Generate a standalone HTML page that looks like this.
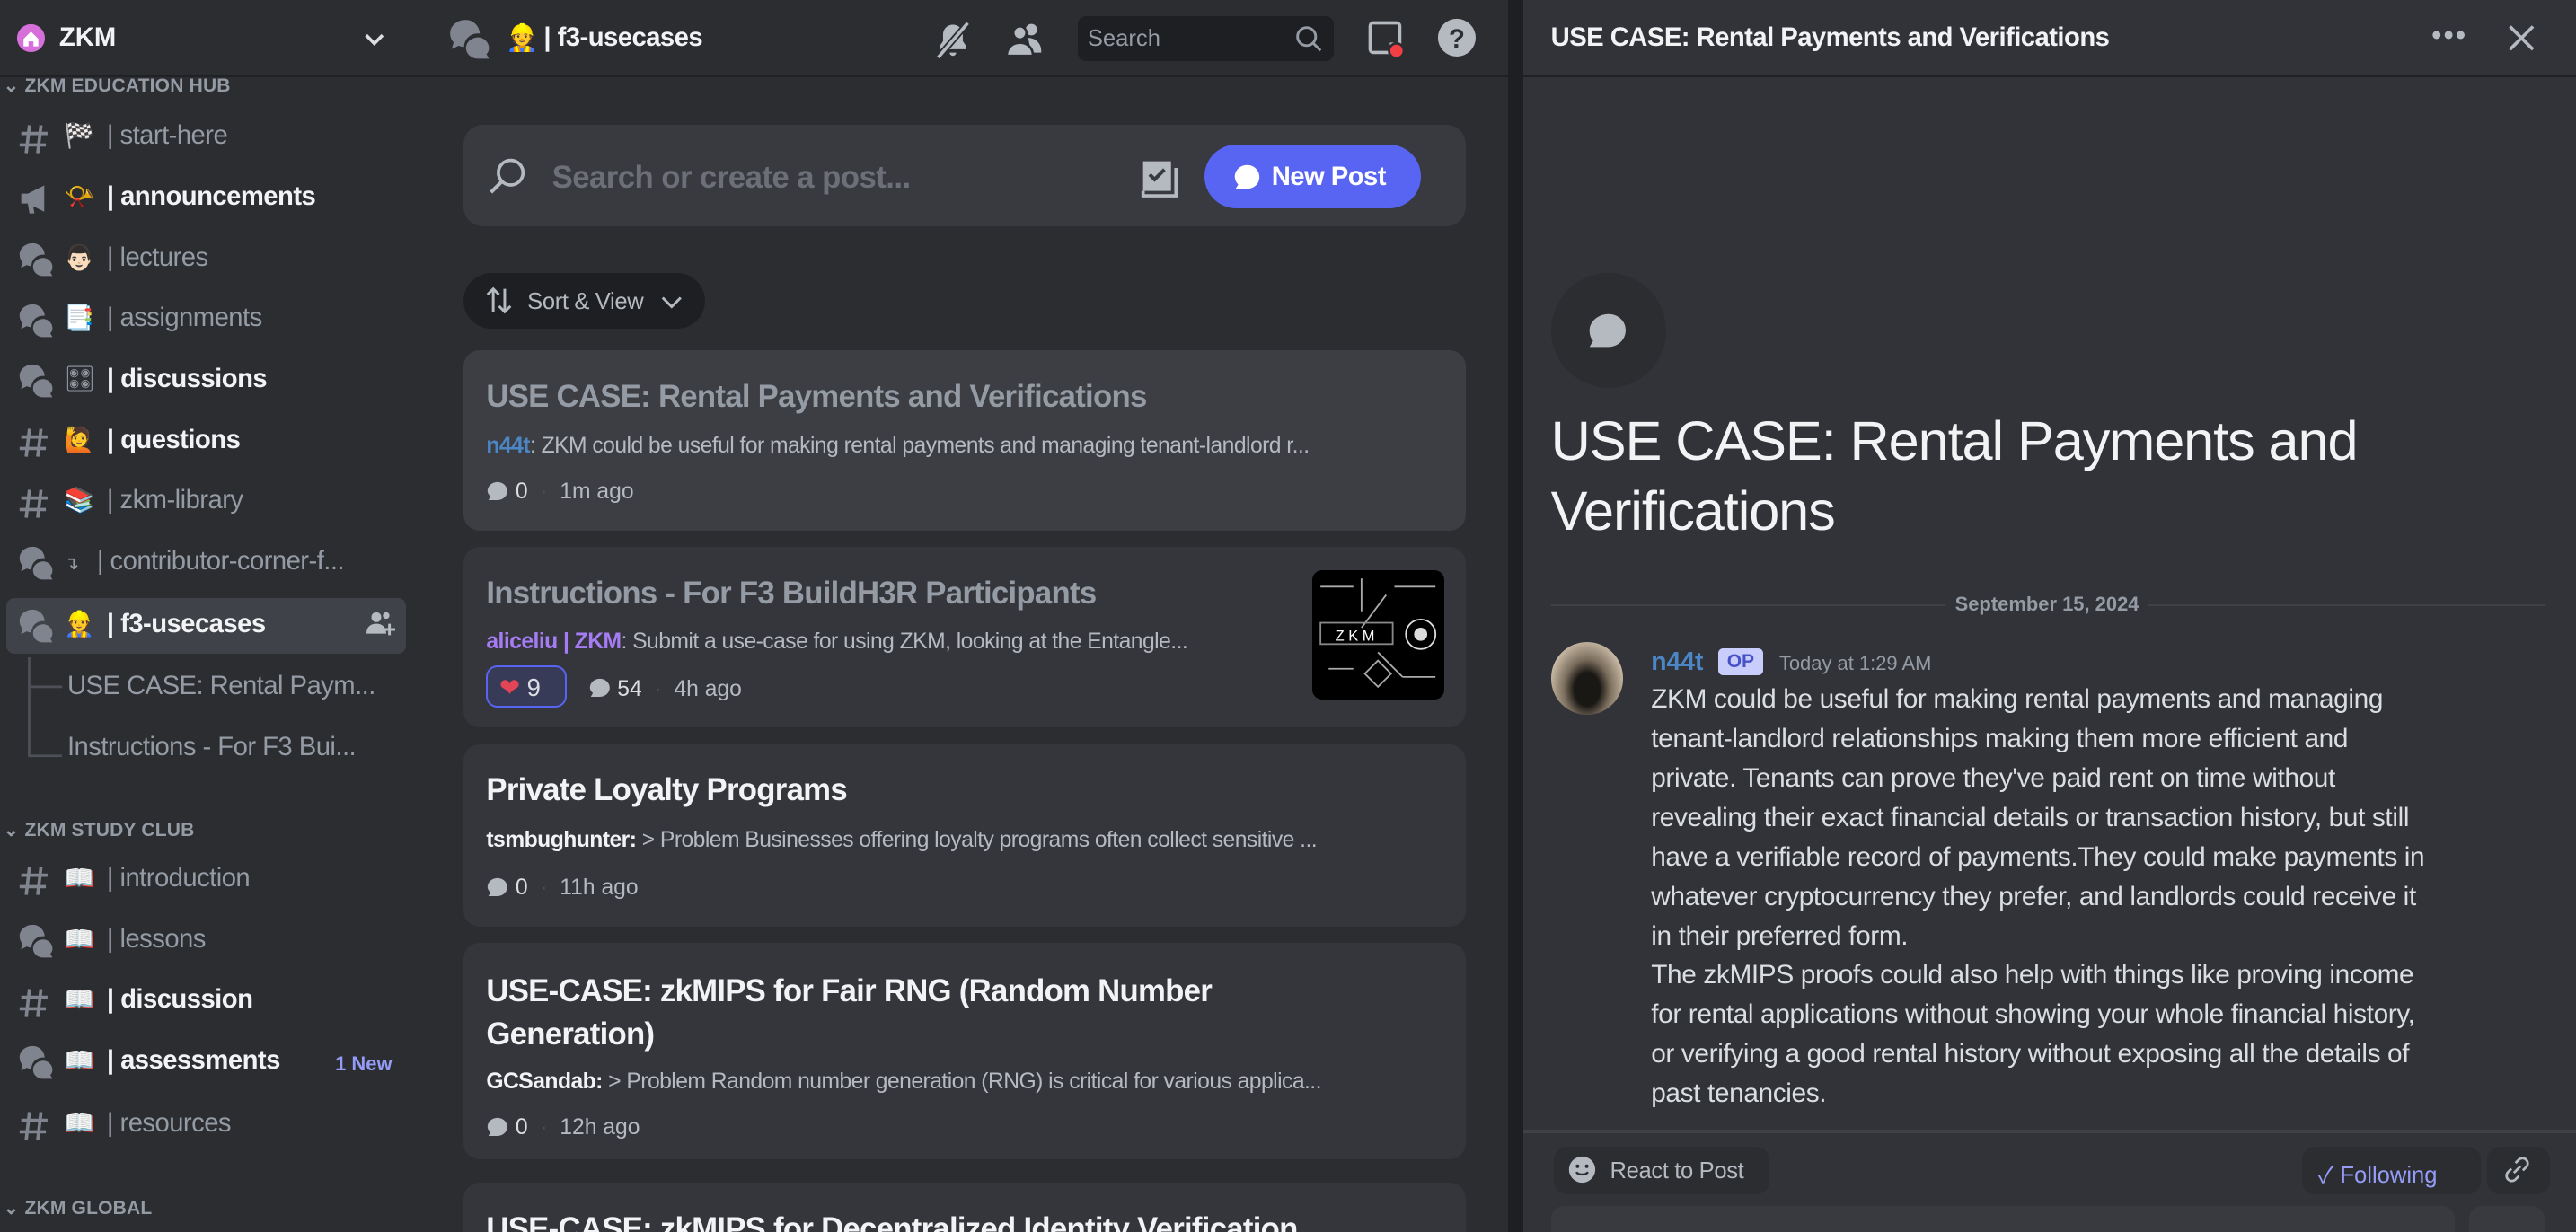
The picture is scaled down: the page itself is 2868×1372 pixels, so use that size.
<!DOCTYPE html>
<html><head><meta charset="utf-8"><style>
html,body{margin:0;padding:0;background:#313338;overflow:hidden}
#w{zoom:1.82908;width:1568px;height:750px;position:relative;font-family:"Liberation Sans","Noto Sans CJK SC",sans-serif;color:#dbdee1;overflow:hidden}
.a{position:absolute;white-space:nowrap}
#sb{left:0;top:0;width:256px;height:750px;background:#2b2d31}
#mid{left:256px;top:0;width:662px;height:750px;background:#2b2d31}
#gap{left:918px;top:0;width:9px;height:750px;background:#1e1f22}
#rp{left:927px;top:0;width:641px;height:750px;background:#313338}
.hdr{height:46px;box-shadow:0 1px 0 #1f2023}
.ch{font-size:16px;color:#949ba4;letter-spacing:-.3px}
.ch b{font-weight:600;color:#f2f3f5}
.em{display:inline-block;width:26px;font-size:15px}
.ic{position:absolute;left:11px}
.cat{font-size:11.5px;font-weight:700;color:#949ba4;letter-spacing:.1px}
.card{position:absolute;left:26px;width:610px;background:#35363c;border-radius:10px}
.ct{position:absolute;left:14px;font-size:19px;font-weight:600;color:#f2f3f5;letter-spacing:-.4px;white-space:nowrap}
.cp{position:absolute;left:14px;font-size:13.5px;color:#b5bac1;letter-spacing:-.3px;white-space:nowrap}
.cm{position:absolute;left:14px;font-size:13.5px;color:#b5bac1;white-space:nowrap}
.cm svg{vertical-align:-3px}
.p{font-size:16.3px;line-height:24px;color:#dbdee1;letter-spacing:-.2px}
</style></head><body><div id="w">
<svg width="0" height="0" style="position:absolute">
 <defs>
  <symbol id="th" viewBox="0 0 22 22"><path d="M9 1C4.6 1 1 4 1 8c0 1.8.7 3.4 1.8 4.6L1.8 16l3.6-1.7c.9.4 1.8.6 2.8.7C8.2 11 11.3 8 15.3 8h1C16 4 12.8 1 9 1z" fill="#80848e"/><path d="M15.5 10c-3.6 0-6.3 2.5-6.3 5.5s2.7 5.5 6.3 5.5h5.5l-1.3-2.3c.9-.9 1.3-2 1.3-3.2 0-3-2.7-5.5-5.5-5.5z" fill="#80848e"/></symbol>
  <symbol id="ha" viewBox="0 0 22 22"><path d="M7 3L5 20M14 3l-2 17M2 8h16M1 15h16" stroke="#80848e" stroke-width="2" fill="none"/></symbol>
  <symbol id="mg" viewBox="0 0 22 22"><path d="M2 8h4l10-5v16L6 14H2z" fill="#80848e"/><path d="M6 14l1 6h3l-1-6" fill="#80848e"/></symbol>
  <symbol id="bu" viewBox="0 0 14 14"><path d="M7 1c3.3 0 6 2.4 6 5.5S10.3 12 7 12H1.5l1.3-2.2C1.7 8.8 1 7.7 1 6.5 1 3.4 3.7 1 7 1z" fill="#b5bac1"/></symbol>
 </defs>
</svg>

<div class="a" id="sb">
 <div class="hdr" style="position:relative">
  <svg class="a" style="left:10px;top:14px" width="18" height="18" viewBox="0 0 18 18"><circle cx="9" cy="9" r="8.5" fill="#d56fd9"/><path d="M4.5 9.5L9 5l4.5 4.5V14h-3v-3h-3v3h-3z" fill="#fff"/></svg>
  <div class="a" style="left:36px;top:14px;font-size:16px;font-weight:700;color:#f2f3f5">ZKM</div>
  <svg class="a" style="left:221px;top:17px" width="14" height="14" viewBox="0 0 14 14"><path d="M2 4.5l5 5 5-5" stroke="#dbdee1" stroke-width="2" fill="none"/></svg>
 </div>
 <div class="a cat" style="left:2px;top:45px">⌄ ZKM EDUCATION HUB</div>
 <div class="a" style="left:4px;top:364px;width:243px;height:34px;background:#404249;border-radius:5px"></div>
</div>

<div class="a" id="mid"><div class="hdr" style="position:relative;background:#2b2d31"></div></div>
<div class="a" id="gap"></div>
<div class="a" id="rp"><div class="hdr" style="background:#313338"></div></div>

<!-- channel icons -->
<svg class="ic" style="top:73px" width="22" height="22"><use href="#ha"/></svg>
<svg class="ic" style="top:110px" width="22" height="22"><use href="#mg"/></svg>
<svg class="ic" style="top:147px" width="22" height="22"><use href="#th"/></svg>
<svg class="ic" style="top:184px" width="22" height="22"><use href="#th"/></svg>
<svg class="ic" style="top:221px" width="22" height="22"><use href="#th"/></svg>
<svg class="ic" style="top:258px" width="22" height="22"><use href="#ha"/></svg>
<svg class="ic" style="top:295px" width="22" height="22"><use href="#ha"/></svg>
<svg class="ic" style="top:332px" width="22" height="22"><use href="#th"/></svg>
<svg class="ic" style="top:370px" width="22" height="22"><use href="#th"/></svg>
<svg class="ic" style="top:525px" width="22" height="22"><use href="#ha"/></svg>
<svg class="ic" style="top:562px" width="22" height="22"><use href="#th"/></svg>
<svg class="ic" style="top:599px" width="22" height="22"><use href="#ha"/></svg>
<svg class="ic" style="top:636px" width="22" height="22"><use href="#th"/></svg>
<svg class="ic" style="top:674px" width="22" height="22"><use href="#ha"/></svg>

<div class="a ch" style="left:39px;top:74px"><span class="em">🏁</span>| start-here</div>
<div class="a ch" style="left:39px;top:111px"><span class="em">📯</span><b>| announcements</b></div>
<div class="a ch" style="left:39px;top:148px"><span class="em">👨🏻</span>| lectures</div>
<div class="a ch" style="left:39px;top:185px"><span class="em">📑</span>| assignments</div>
<div class="a ch" style="left:39px;top:222px"><span class="em">🎛</span><b>| discussions</b></div>
<div class="a ch" style="left:39px;top:259px"><span class="em">🙋</span><b>| questions</b></div>
<div class="a ch" style="left:39px;top:296px"><span class="em">📚</span>| zkm-library</div>
<div class="a ch" style="left:39px;top:333px"><span style="font-size:11px;display:inline-block;width:20px">↴</span>| contributor-corner-f...</div>
<div class="a ch" style="left:39px;top:371px"><span class="em">👷</span><b>| f3-usecases</b></div>
<svg class="a" style="left:223px;top:372px" width="18" height="16" viewBox="0 0 18 16"><circle cx="6" cy="4" r="3" fill="#b5bac1"/><path d="M0 14c0-4 2.5-6 6-6s6 2 6 6z" fill="#b5bac1"/><circle cx="12" cy="3" r="2" fill="#b5bac1"/><path d="M14 8v7M10.5 11.5h7" stroke="#b5bac1" stroke-width="1.6"/></svg>
<svg class="a" style="left:15px;top:400px" width="24" height="64"><path d="M3 0v60h20M3 18h20" stroke="#4e5058" stroke-width="1.5" fill="none"/></svg>
<div class="a ch" style="left:41px;top:409px">USE CASE: Rental Paym...</div>
<div class="a ch" style="left:41px;top:446px">Instructions - For F3 Bui...</div>
<div class="a cat" style="left:2px;top:498px">⌄ ZKM STUDY CLUB</div>
<div class="a ch" style="left:39px;top:526px"><span class="em">📖</span>| introduction</div>
<div class="a ch" style="left:39px;top:563px"><span class="em">📖</span>| lessons</div>
<div class="a ch" style="left:39px;top:600px"><span class="em">📖</span><b>| discussion</b></div>
<div class="a ch" style="left:39px;top:637px"><span class="em">📖</span><b>| assessments</b></div>
<div class="a" style="left:204px;top:641px;font-size:12px;font-weight:700;color:#949cf7">1 New</div>
<div class="a ch" style="left:39px;top:675px"><span class="em">📖</span>| resources</div>
<div class="a cat" style="left:2px;top:728px">⌄ ZKM GLOBAL</div>

<!-- forum header -->
<svg class="a" style="left:273px;top:11px" width="26" height="26"><use href="#th"/></svg>
<div class="a" style="left:308px;top:14px;font-size:16px">👷</div>
<div class="a" style="left:331px;top:14px;font-size:16px;font-weight:700;color:#f2f3f5;letter-spacing:-.3px">| f3-usecases</div>
<svg class="a" style="left:568px;top:12px" width="24" height="24" viewBox="0 0 24 24"><path d="M12 3c-3.5 0-6 2.7-6 6v4l-2 3v2h16v-2l-2-3V9c0-3.3-2.5-6-6-6zM10 20a2 2 0 004 0z" fill="#b5bac1"/><path d="M3 23L21 2" stroke="#2b2d31" stroke-width="4"/><path d="M3 23L21 2" stroke="#b5bac1" stroke-width="2"/></svg>
<svg class="a" style="left:612px;top:12px" width="26" height="24" viewBox="0 0 26 24"><circle cx="16" cy="6" r="3.5" fill="#b5bac1"/><path d="M14 11c4 0 8 3 8 8v1h-6z" fill="#b5bac1"/><circle cx="9" cy="8" r="4" fill="#b5bac1" stroke="#2b2d31" stroke-width="1.5"/><path d="M1 22c0-5 3.5-8 8-8s8 3 8 8z" fill="#b5bac1" stroke="#2b2d31" stroke-width="1.5"/></svg>
<div class="a" style="left:656px;top:10px;width:156px;height:27px;background:#1e1f22;border-radius:5px"></div>
<div class="a" style="left:662px;top:16px;font-size:14px;color:#949ba4">Search</div>
<svg class="a" style="left:788px;top:15px" width="18" height="18" viewBox="0 0 18 18"><circle cx="7.5" cy="7.5" r="5.5" stroke="#949ba4" stroke-width="1.6" fill="none"/><path d="M11.5 11.5L16 16" stroke="#949ba4" stroke-width="1.6"/></svg>
<svg class="a" style="left:831px;top:11px" width="26" height="26" viewBox="0 0 26 26"><rect x="2" y="2" width="20" height="20" rx="3" fill="#b5bac1"/><path d="M4 4h16v11h-5v5H4z" fill="#2b2d31"/><circle cx="19" cy="20" r="4.5" fill="#f23f43" stroke="#2b2d31" stroke-width="1.5"/></svg>
<svg class="a" style="left:875px;top:11px" width="24" height="24" viewBox="0 0 24 24"><circle cx="12" cy="12" r="11.5" fill="#b5bac1"/><text x="12" y="18" text-anchor="middle" font-family="Liberation Sans" font-weight="700" font-size="16" fill="#2b2d31">?</text></svg>

<!-- search / new post -->
<div class="a" style="left:282px;top:76px;width:610px;height:62px;background:#383a40;border-radius:12px"></div>
<svg class="a" style="left:297px;top:95px" width="26" height="26" viewBox="0 0 26 26"><circle cx="14" cy="10" r="7.5" stroke="#b5bac1" stroke-width="2" fill="none"/><path d="M8.5 15.5L2 22" stroke="#b5bac1" stroke-width="2.2"/></svg>
<div class="a" style="left:336px;top:98px;font-size:19px;font-weight:600;color:#6d6f78;letter-spacing:-.3px">Search or create a post...</div>
<svg class="a" style="left:694px;top:96px" width="26" height="26" viewBox="0 0 26 26"><path d="M2 2h17v18H2z" fill="#b5bac1"/><path d="M6 10l3 3 6-6" stroke="#383a40" stroke-width="2.2" fill="none"/><path d="M2 20v3h20V6" stroke="#b5bac1" stroke-width="2" fill="none"/></svg>
<div class="a" style="left:733px;top:88px;width:132px;height:39px;background:#5865f2;border-radius:20px"></div>
<svg class="a" style="left:750px;top:99px" width="18" height="18" viewBox="0 0 18 18"><path d="M9 1.5c4.2 0 7.5 3.2 7.5 7.3S13.2 16 9 16H2l1.6-2.6A7.2 7.2 0 011.5 8.8C1.5 4.7 4.8 1.5 9 1.5z" fill="#fff"/></svg>
<div class="a" style="left:774px;top:99px;font-size:16px;font-weight:700;color:#fff;letter-spacing:-.3px">New Post</div>

<div class="a" style="left:282px;top:166px;width:147px;height:34px;background:#1e1f22;border-radius:17px"></div>
<svg class="a" style="left:295px;top:174px" width="18" height="18" viewBox="0 0 18 18"><path d="M5 16V2M1.5 5.5L5 2l3.5 3.5M12 2v14M8.5 12.5L12 16l3.5-3.5" stroke="#b5bac1" stroke-width="1.6" fill="none"/></svg>
<div class="a" style="left:321px;top:176px;font-size:14px;color:#b5bac1;letter-spacing:-.2px">Sort &amp; View</div>
<svg class="a" style="left:402px;top:178px" width="14" height="12" viewBox="0 0 14 12"><path d="M1.5 3l5.5 5.5L12.5 3" stroke="#b5bac1" stroke-width="1.6" fill="none"/></svg>

<!-- cards -->
<div class="a" style="left:256px;top:0;width:662px;height:750px">
 <div class="card" style="top:213px;height:110px;background:#3c3e44">
  <div class="ct" style="top:18px;color:#949ba4">USE CASE: Rental Payments and Verifications</div>
  <div class="cp" style="top:51px"><span style="color:#4c86c4;font-weight:600">n44t</span>: ZKM could be useful for making rental payments and managing tenant-landlord r...</div>
  <div class="cm" style="top:79px"><svg width="14" height="14"><use href="#bu"/></svg> <span style="color:#dbdee1">0</span> &nbsp;<span style="color:#4e5058">·</span>&nbsp; 1m ago</div>
 </div>
 <div class="card" style="top:333px;height:110px">
  <div class="ct" style="top:18px;color:#949ba4">Instructions - For F3 BuildH3R Participants</div>
  <div class="cp" style="top:50px"><span style="color:#a67cf5;font-weight:600">aliceliu | ZKM</span>: Submit a use-case for using ZKM, looking at the Entangle...</div>
  <div style="position:absolute;left:14px;top:72px;width:49px;height:26px;border:1.5px solid #5865f2;background:#383b58;border-radius:7px;box-sizing:border-box"></div>
  <div class="cm" style="top:77px;left:22px;font-size:15px"><span style="color:#e34557">❤</span> <span style="color:#dbdee1">9</span></div>
  <div class="cm" style="top:79px;left:76px"><svg width="14" height="14"><use href="#bu"/></svg> <span style="color:#dbdee1">54</span> &nbsp;<span style="color:#4e5058">·</span>&nbsp; 4h ago</div>
  <div style="position:absolute;left:517px;top:14px;width:80px;height:79px;background:#000;border-radius:6px;overflow:hidden">
   <svg width="80" height="79"><path d="M5 10h20M30 5v20M50 10h25M10 60h15M55 65h20M30 35L45 15M40 50l15 15" stroke="#aaa" stroke-width="1" fill="none"/><rect x="5" y="32" width="44" height="13" stroke="#888" fill="none"/><text x="14" y="43" fill="#fff" font-size="9" font-family="Liberation Sans">Z K M</text><circle cx="66" cy="39" r="9" stroke="#ddd" fill="none"/><circle cx="66" cy="39" r="4" fill="#ddd"/><path d="M40 55l8 8-8 8-8-8z" stroke="#aaa" fill="none"/></svg>
  </div>
 </div>
 <div class="card" style="top:453px;height:111px">
  <div class="ct" style="top:18px">Private Loyalty Programs</div>
  <div class="cp" style="top:51px"><span style="color:#f2f3f5;font-weight:600">tsmbughunter:</span> &gt; Problem Businesses offering loyalty programs often collect sensitive ...</div>
  <div class="cm" style="top:80px"><svg width="14" height="14"><use href="#bu"/></svg> <span style="color:#dbdee1">0</span> &nbsp;<span style="color:#4e5058">·</span>&nbsp; 11h ago</div>
 </div>
 <div class="card" style="top:574px;height:132px">
  <div class="ct" style="top:17px;line-height:26px">USE-CASE: zkMIPS for Fair RNG (Random Number<br>Generation)</div>
  <div class="cp" style="top:77px"><span style="color:#f2f3f5;font-weight:600">GCSandab:</span> &gt; Problem Random number generation (RNG) is critical for various applica...</div>
  <div class="cm" style="top:105px"><svg width="14" height="14"><use href="#bu"/></svg> <span style="color:#dbdee1">0</span> &nbsp;<span style="color:#4e5058">·</span>&nbsp; 12h ago</div>
 </div>
 <div class="card" style="top:720px;height:60px">
  <div class="ct" style="top:18px">USE-CASE: zkMIPS for Decentralized Identity Verification</div>
 </div>
</div>

<!-- right panel -->
<div class="a" style="left:944px;top:14px;font-size:16px;font-weight:700;color:#f2f3f5;letter-spacing:-.3px">USE CASE: Rental Payments and Verifications</div>
<div class="a" style="left:1480px;top:11px;font-size:18px;color:#b5bac1;letter-spacing:1px">•••</div>
<svg class="a" style="left:1525px;top:13px" width="20" height="20" viewBox="0 0 20 20"><path d="M3 3l14 14M17 3L3 17" stroke="#b5bac1" stroke-width="2"/></svg>
<div class="a" style="left:944px;top:166px;width:70px;height:70px;border-radius:50%;background:#2b2d31"></div>
<svg class="a" style="left:960px;top:184px" width="36" height="36" viewBox="0 0 36 36"><path d="M19 7c6 0 10.5 4.3 10.5 9.8S25 27 19 27H7.5l2.2-3.8C8 21.5 7.5 19 7.5 16.8 7.5 11.3 13 7 19 7z" fill="#b5bac1"/></svg>
<div class="a" style="left:944px;top:247px;font-size:33.5px;line-height:43px;color:#f2f3f5;letter-spacing:-.6px">USE CASE: Rental Payments and<br>Verifications</div>
<div class="a" style="left:944px;top:368px;width:605px;height:1px;background:#3f4147"></div>
<div class="a" style="left:1184px;top:361px;padding:0 6px;background:#313338;font-size:12px;font-weight:700;color:#949ba4">September 15, 2024</div>
<div class="a" style="left:944px;top:391px;width:44px;height:44px;border-radius:50%;background:radial-gradient(ellipse at 50% 65%,#1a1815 0 25%,#7a6d5c 45%,#c9bba6 75%)"></div>
<div class="a" style="left:1005px;top:394px;font-size:15.5px;font-weight:600;color:#4c86c4">n44t</div>
<div class="a" style="left:1046px;top:395px;width:27px;height:16px;background:#c9cdfb;border-radius:3px;color:#4752c4;font-size:11.5px;font-weight:700;text-align:center;line-height:16px">OP</div>
<div class="a" style="left:1083px;top:397px;font-size:12px;color:#949ba4">Today at 1:29 AM</div>
<div class="a p" style="left:1005px;top:414px">ZKM could be useful for making rental payments and managing<br>tenant-landlord relationships making them more efficient and<br>private. Tenants can prove they've paid rent on time without<br>revealing their exact financial details or transaction history, but still<br>have a verifiable record of payments.They could make payments in<br>whatever cryptocurrency they prefer, and landlords could receive it<br>in their preferred form.<br>The zkMIPS proofs could also help with things like proving income<br>for rental applications without showing your whole financial history,<br>or verifying a good rental history without exposing all the details of<br>past tenancies.</div>
<div class="a" style="left:927px;top:688px;width:641px;height:2px;background:#3f4147"></div>
<div class="a" style="left:946px;top:698px;width:131px;height:29px;background:#2b2d31;border-radius:8px"></div>
<svg class="a" style="left:954px;top:703px" width="18" height="18" viewBox="0 0 18 18"><circle cx="9" cy="9" r="8" fill="#b5bac1"/><circle cx="6.2" cy="7" r="1.1" fill="#2b2d31"/><circle cx="11.8" cy="7" r="1.1" fill="#2b2d31"/><path d="M5.5 10.5c1 2 6 2 7 0" stroke="#2b2d31" stroke-width="1.3" fill="none"/></svg>
<div class="a" style="left:980px;top:705px;font-size:14px;color:#b5bac1;letter-spacing:-.2px">React to Post</div>
<div class="a" style="left:1401px;top:698px;width:109px;height:29px;background:#2b2d31;border-radius:8px"></div>
<div class="a" style="left:1411px;top:704px;font-size:14px;color:#949cf7">✓ Following</div>
<div class="a" style="left:1514px;top:698px;width:38px;height:29px;background:#2b2d31;border-radius:8px"></div>
<svg class="a" style="left:1523px;top:703px" width="18" height="18" viewBox="0 0 18 18"><path d="M8 5l2-2a3 3 0 014.5 4.5l-2 2M10 13l-2 2a3 3 0 01-4.5-4.5l2-2M7 11l4-4" stroke="#b5bac1" stroke-width="1.5" fill="none"/></svg>
<div class="a" style="left:944px;top:734px;width:550px;height:30px;background:#383a40;border-radius:8px"></div>
<div class="a" style="left:1503px;top:734px;width:46px;height:30px;background:#383a40;border-radius:8px"></div>
</div></body></html>
